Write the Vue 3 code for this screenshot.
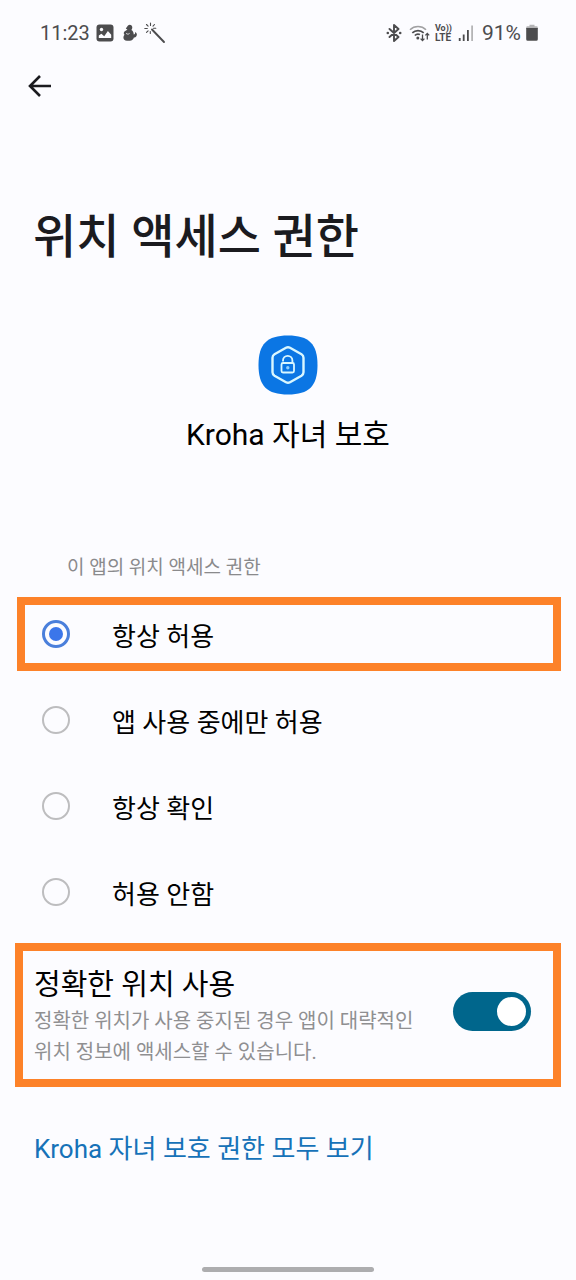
<script setup>
import { ref } from 'vue'

const options = ['항상 허용', '앱 사용 중에만 허용', '항상 확인', '허용 안함']
const selected = ref(options[0])
const precise = ref(true)
</script>

<template>
  <div class="screen">
    <header class="status">
      <span class="clock">11:23</span>
      <svg class="ico-image" viewBox="0 0 18 18" aria-hidden="true">
        <rect x=".5" y=".5" width="17" height="17" rx="3" fill="#4c4c4e" />
        <circle cx="5.500" cy="5.500" r="1.700" fill="#fcfcff" />
        <path d="M2.800 14v-2.500l2.600-1.800 2.800 2.600 3.700-5.200 3.300 3.600V14z" fill="#fcfcff" />
      </svg>
      <svg class="ico-pet" viewBox="0 0 16 18" aria-hidden="true">
        <path
          d="M6 1.600C7.200.2 9.800.6 10.200 2.800c.3 1.500-.2 2.400-.8 3.200 1.600 1 2.400 2.600 2.300 4.600 1.200-.3 1.700-1.200 1.300-2.600 1.800.6 2.400 2.500 1.500 4-.6 1-1.600 1.500-2.600 1.600-.5 2-1.900 3.200-4.200 3.200H5C2.600 16.800 1.400 15.300 1.400 13.500c0-1.100.4-2 1.100-2.700C1.600 10 1.500 8.600 2.500 7.500c.9-.9 2.200-1.200 3-1.700L3.800 4.600z"
          fill="#4c4c4e"
        />
        <path d="M4 9.200c1 1.200 2.600 1.200 3.600.2" fill="none" stroke="#fcfcff" stroke-width=".8" />
      </svg>
      <svg class="ico-wand" viewBox="0 0 22 22" aria-hidden="true" fill="none" stroke="#4c4c4e" stroke-linecap="round">
        <path d="M8 7.500L20 20" stroke-width="1.900" />
        <path
          d="M6.500 1v2.500M2.500 2.500l1.600 1.700M10.500 2.500L9 4.200M.8 6.500h2.500M9.500 6.200h2.300M2.500 10.400l1.600-1.600M6.300 9.500v2"
          stroke-width="1.100"
        />
      </svg>
      <span class="grow"></span>
      <svg class="ico-bt" viewBox="0 0 16 18" aria-hidden="true" fill="none" stroke="#4c4c4e" stroke-width="1.900">
        <path d="M3.500 5l9 8L8 17V1l4.500 4-9 8" stroke-linejoin="round" stroke-linecap="round" />
        <circle cx="1.800" cy="9" r="1.300" fill="#4c4c4e" stroke="none" />
        <circle cx="14.200" cy="9" r="1.300" fill="#4c4c4e" stroke="none" />
      </svg>
      <svg class="ico-wifi" viewBox="0 0 22 18" aria-hidden="true" fill="none">
        <path d="M1 5.800a11.500 11.500 0 0 1 16 0" stroke="#a0a0a2" stroke-width="1.600" />
        <path d="M3.300 8.800a8.300 8.300 0 0 1 11.400 0M5.800 11.500a4.600 4.600 0 0 1 5.200-.9" stroke="#4c4c4e" stroke-width="1.700" />
        <circle cx="8.800" cy="14" r="1.500" fill="#4c4c4e" />
        <path d="M13.500 10.500v6M11.600 14.600l1.900 2 1.900-2M18.300 15.500v-6M16.400 11.400l1.900-2 1.900 2" stroke="#4c4c4e" stroke-width="1.300" />
      </svg>
      <span class="volte"><span class="vo">Vo))</span><span>LTE</span></span>
      <svg class="ico-signal" viewBox="0 0 16 18" aria-hidden="true">
        <path d="M.8 14h1.800v3H.8zM4.800 10.500h1.800V17H4.800zM9 6h1.800v11H9z" fill="#4c4c4e" />
        <path d="M13.200 1.500H15V17h-1.800z" fill="#b4b4b6" />
      </svg>
      <span class="battery-text">91%</span>
      <svg class="ico-battery" viewBox="0 0 12 18" aria-hidden="true">
        <path d="M3.500.8h5v2h-5zM1.500 2.200h9a1.300 1.300 0 0 1 1.300 1.300V5H.2V3.500a1.300 1.300 0 0 1 1.300-1.300z" fill="#b4b4b6" />
        <path d="M.2 4h11.600v11.300a1.500 1.500 0 0 1-1.500 1.500H1.700a1.500 1.500 0 0 1-1.500-1.500z" fill="#4c4c4e" />
      </svg>
    </header>

    <nav class="toolbar">
      <button class="back" type="button" aria-label="뒤로">
        <svg viewBox="0 0 24 24" fill="none" stroke="#1b1b1f" stroke-width="2.600">
          <path d="M23 12H2M12 2L2 12l10 10" />
        </svg>
      </button>
    </nav>

    <main>
      <h1>위치 액세스 권한</h1>

      <section class="app">
        <svg class="app-icon" viewBox="0 0 60 60" aria-hidden="true">
          <path d="M30 .5C51 .5 59.500 9 59.500 30S51 59.500 30 59.500.5 51 .5 30 9 .5 30 .5z" fill="#0b76e4" />
          <path
            d="M28 12.800q2-1.100 4 0l11.500 6.500q2 1.200 2 3.400v14.600q0 2.200-2 3.400L32 47.200q-2 1.100-4 0l-11.500-6.500q-2-1.200-2-3.400V22.700q0-2.200 2-3.400z"
            fill="none" stroke="#d9f7ff" stroke-width="2.400"
          />
          <rect x="23.500" y="28" width="12.500" height="9.500" rx="1.500" fill="none" stroke="#d9f7ff" stroke-width="1.800" />
          <path d="M25 26.500v-1a4.700 4.700 0 0 1 9.400 0V28" fill="none" stroke="#d9f7ff" stroke-width="1.800" />
          <circle cx="29.800" cy="32.800" r="1.700" fill="#8fd0ff" />
        </svg>
        <p class="app-name">Kroha 자녀 보호</p>
      </section>

      <fieldset class="choices">
        <legend>이 앱의 위치 액세스 권한</legend>
        <label v-for="(name, i) in options" :key="name" class="choice" :class="{ framed: i === 0 }">
          <input v-model="selected" type="radio" name="access" :value="name" />
          <span>{{ name }}</span>
        </label>
      </fieldset>

      <section class="precise">
        <div class="precise-text">
          <label class="precise-title" for="precise">정확한 위치 사용</label>
          <p id="precise-desc">정확한 위치가 사용 중지된 경우 앱이 대략적인 위치 정보에 액세스할 수 있습니다.</p>
        </div>
        <input id="precise" v-model="precise" class="switch" type="checkbox" role="switch" aria-describedby="precise-desc" />
      </section>

      <a class="all" href="#">Kroha 자녀 보호 권한 모두 보기</a>
    </main>

    <div class="home-bar"></div>
  </div>
</template>

<style>
body {
  margin: 0;
  background: #fcfcff;
}
</style>

<style scoped>
.screen {
  box-sizing: border-box;
  min-height: 100vh;
  display: flex;
  flex-direction: column;
  padding-bottom: 8px;
  background: #fcfcff;
  color: #000;
  font-family: Roboto, "Noto Sans CJK KR", sans-serif;
}

.status {
  display: flex;
  align-items: center;
  height: 66px;
  padding: 0 38px 0 40px;
  color: #4c4c4e;
  font-size: 20px;
}

.status svg {
  flex: none;
  height: 18px;
}

.grow {
  flex: 1;
}

.ico-image {
  width: 18px;
  margin-left: 6px;
}

.ico-pet {
  width: 16px;
  margin-left: 8px;
}

.status .ico-wand {
  width: 22px;
  height: 22px;
  margin-left: 6px;
}

.ico-bt {
  width: 16px;
  margin-right: 7px;
}

.ico-wifi {
  width: 22px;
  margin-right: 4px;
}

.volte {
  display: flex;
  flex-direction: column;
  margin-right: 6px;
  font-size: 10px;
  font-weight: 700;
  line-height: 9px;
}

.vo {
  font-size: 9px;
}

.ico-signal {
  width: 16px;
  margin-right: 8px;
}

.battery-text {
  font-size: 21px;
}

.ico-battery {
  width: 12px;
  margin-left: 5px;
}

.toolbar {
  display: flex;
  padding: 0 20px;
}

.back {
  display: flex;
  padding: 8px;
  border: 0;
  background: none;
}

.back svg {
  width: 24px;
  height: 24px;
}

main {
  display: flex;
  flex-direction: column;
}

h1 {
  margin: 99px 33px 0;
  color: #1b1b1f;
  font-size: 47px;
  font-weight: 500;
  line-height: 64px;
}

.app {
  display: flex;
  flex-direction: column;
  align-items: center;
  margin-top: 66px;
}

.app-icon {
  width: 60px;
  height: 60px;
}

.app-name {
  margin: 20px 0 0;
  font-size: 30px;
  line-height: 40px;
}

.choices {
  min-width: 0;
  margin: 99px 15px 0 17px;
  padding: 0;
  border: 0;
}

legend {
  padding: 0 0 15px 50px;
  color: #8a8a8c;
  font-size: 19px;
  line-height: 28px;
}

.choice {
  box-sizing: border-box;
  display: flex;
  align-items: center;
  gap: 42px;
  height: 86px;
  padding: 0 25px;
  font-size: 26px;
}

.framed {
  height: 74px;
  margin-bottom: 6px;
  padding: 0 17px;
  border: 8px solid #fd8229;
}

.choice input {
  appearance: none;
  box-sizing: border-box;
  flex: none;
  width: 28px;
  height: 28px;
  margin: 0;
  padding: 4px;
  border: 2px solid #bdbdbf;
  border-radius: 50%;
}

.choice input:checked {
  border: 3px solid #4a7fdb;
  background: #3b76ea content-box;
}

.precise {
  display: flex;
  align-items: flex-start;
  justify-content: space-between;
  gap: 24px;
  margin: 8px 15px 0;
  padding: 16px 22px 11px 11px;
  border: 8px solid #fd8229;
}

.precise-text {
  flex: 0 1 384px;
}

.precise-title {
  display: block;
  font-size: 29px;
  line-height: 36px;
}

.precise-text p {
  margin: 3px 0 0;
  color: #8f8f91;
  font-size: 20px;
  line-height: 31px;
  word-break: keep-all;
}

.switch {
  appearance: none;
  box-sizing: border-box;
  display: flex;
  flex: none;
  width: 78px;
  height: 39px;
  margin: 25px 0 0;
  padding: 5px;
  border-radius: 20px;
  background: #a9a9ab;
}

.switch::before {
  content: "";
  width: 29px;
  height: 29px;
  border-radius: 50%;
  background: #fff;
}

.switch:checked {
  justify-content: flex-end;
  background: #00668c;
}

.all {
  align-self: flex-start;
  margin: 43px 34px 0;
  color: #1672b8;
  font-size: 26px;
  line-height: 38px;
  text-decoration: none;
}

.home-bar {
  width: 30%;
  height: 5px;
  margin: auto auto 0;
  border-radius: 3px;
  background: #adadaf;
}
</style>
